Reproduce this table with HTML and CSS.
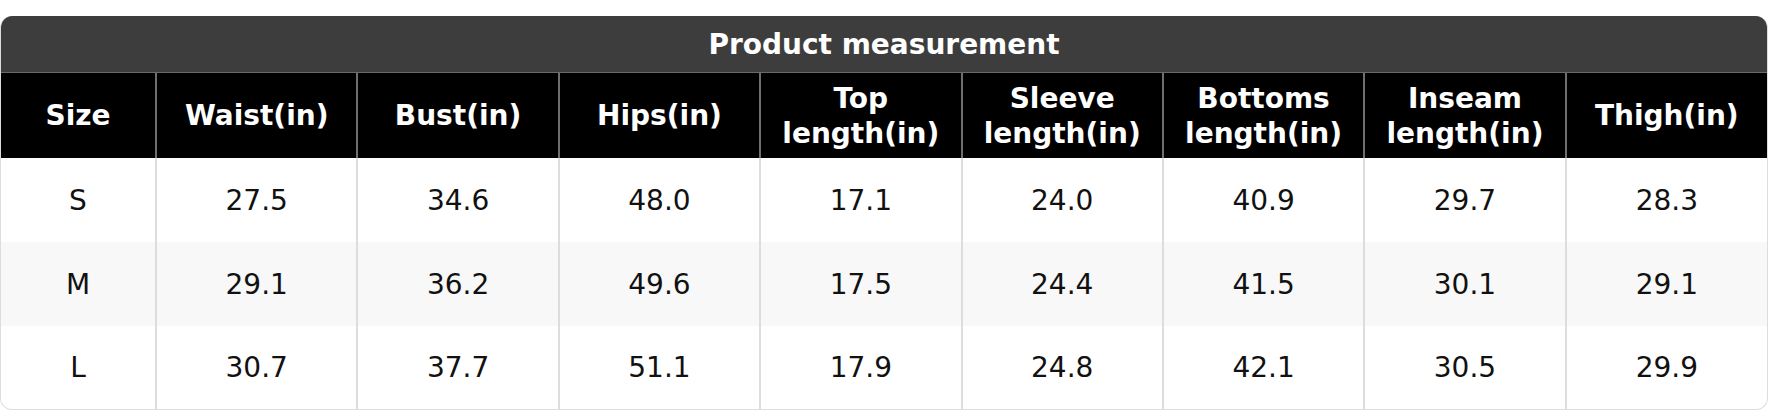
FILE: index.html
```html
<!DOCTYPE html>
<html lang="en">
<head>
<meta charset="utf-8">
<title>Product measurement</title>
<link rel="stylesheet" href="styles.css">
</head>
<body>
<div class="chart">
  <div class="chart-title">Product measurement</div>
  <table class="size-table">
    <colgroup>
      <col class="col-size">
      <col><col><col><col><col><col><col><col>
    </colgroup>
    <thead>
      <tr>
        <th>Size</th>
        <th>Waist(in)</th>
        <th>Bust(in)</th>
        <th>Hips(in)</th>
        <th>Top<br>length(in)</th>
        <th>Sleeve<br>length(in)</th>
        <th>Bottoms<br>length(in)</th>
        <th>Inseam<br>length(in)</th>
        <th>Thigh(in)</th>
      </tr>
    </thead>
    <tbody>
      <tr>
        <td>S</td><td>27.5</td><td>34.6</td><td>48.0</td><td>17.1</td><td>24.0</td><td>40.9</td><td>29.7</td><td>28.3</td>
      </tr>
      <tr class="alt">
        <td>M</td><td>29.1</td><td>36.2</td><td>49.6</td><td>17.5</td><td>24.4</td><td>41.5</td><td>30.1</td><td>29.1</td>
      </tr>
      <tr class="last">
        <td>L</td><td>30.7</td><td>37.7</td><td>51.1</td><td>17.9</td><td>24.8</td><td>42.1</td><td>30.5</td><td>29.9</td>
      </tr>
    </tbody>
  </table>
</div>
</body>
</html>
```
FILE: styles.css
```css
html, body {
  margin: 0;
  padding: 0;
  background: #ffffff;
}

body {
  padding-top: 16px;
  font-family: "DejaVu Sans", Verdana, sans-serif;
}

.chart {
  width: 1768px;
  box-sizing: border-box;
  border: 1px solid #dddddd;
  border-top: none;
  border-radius: 12px;
  overflow: hidden;
  background: #ffffff;
}

.chart-title {
  height: 57px;
  box-sizing: border-box;
  background: #3d3d3d;
  color: #ffffff;
  font-weight: bold;
  font-size: 28px;
  display: flex;
  align-items: center;
  justify-content: center;
  border-bottom: 1px solid #6a6a6a;
}

.size-table {
  width: 100%;
  border-collapse: collapse;
  table-layout: fixed;
}

.col-size {
  width: 155px;
}

.size-table th {
  height: 85px;
  padding: 0;
  background: #000000;
  color: #ffffff;
  font-weight: bold;
  font-size: 28px;
  line-height: 35px;
  text-align: center;
  vertical-align: middle;
  border-right: 2px solid #6f6f6f;
}

.size-table td {
  height: 84px;
  padding: 0;
  color: #111111;
  font-size: 28px;
  text-align: center;
  vertical-align: middle;
  border-right: 2px solid #dddddd;
}

.size-table th:last-child,
.size-table td:last-child {
  border-right: none;
}

.size-table tr.alt td {
  background: #f8f8f8;
}

.size-table tr.last td {
  height: 83px;
}
```
